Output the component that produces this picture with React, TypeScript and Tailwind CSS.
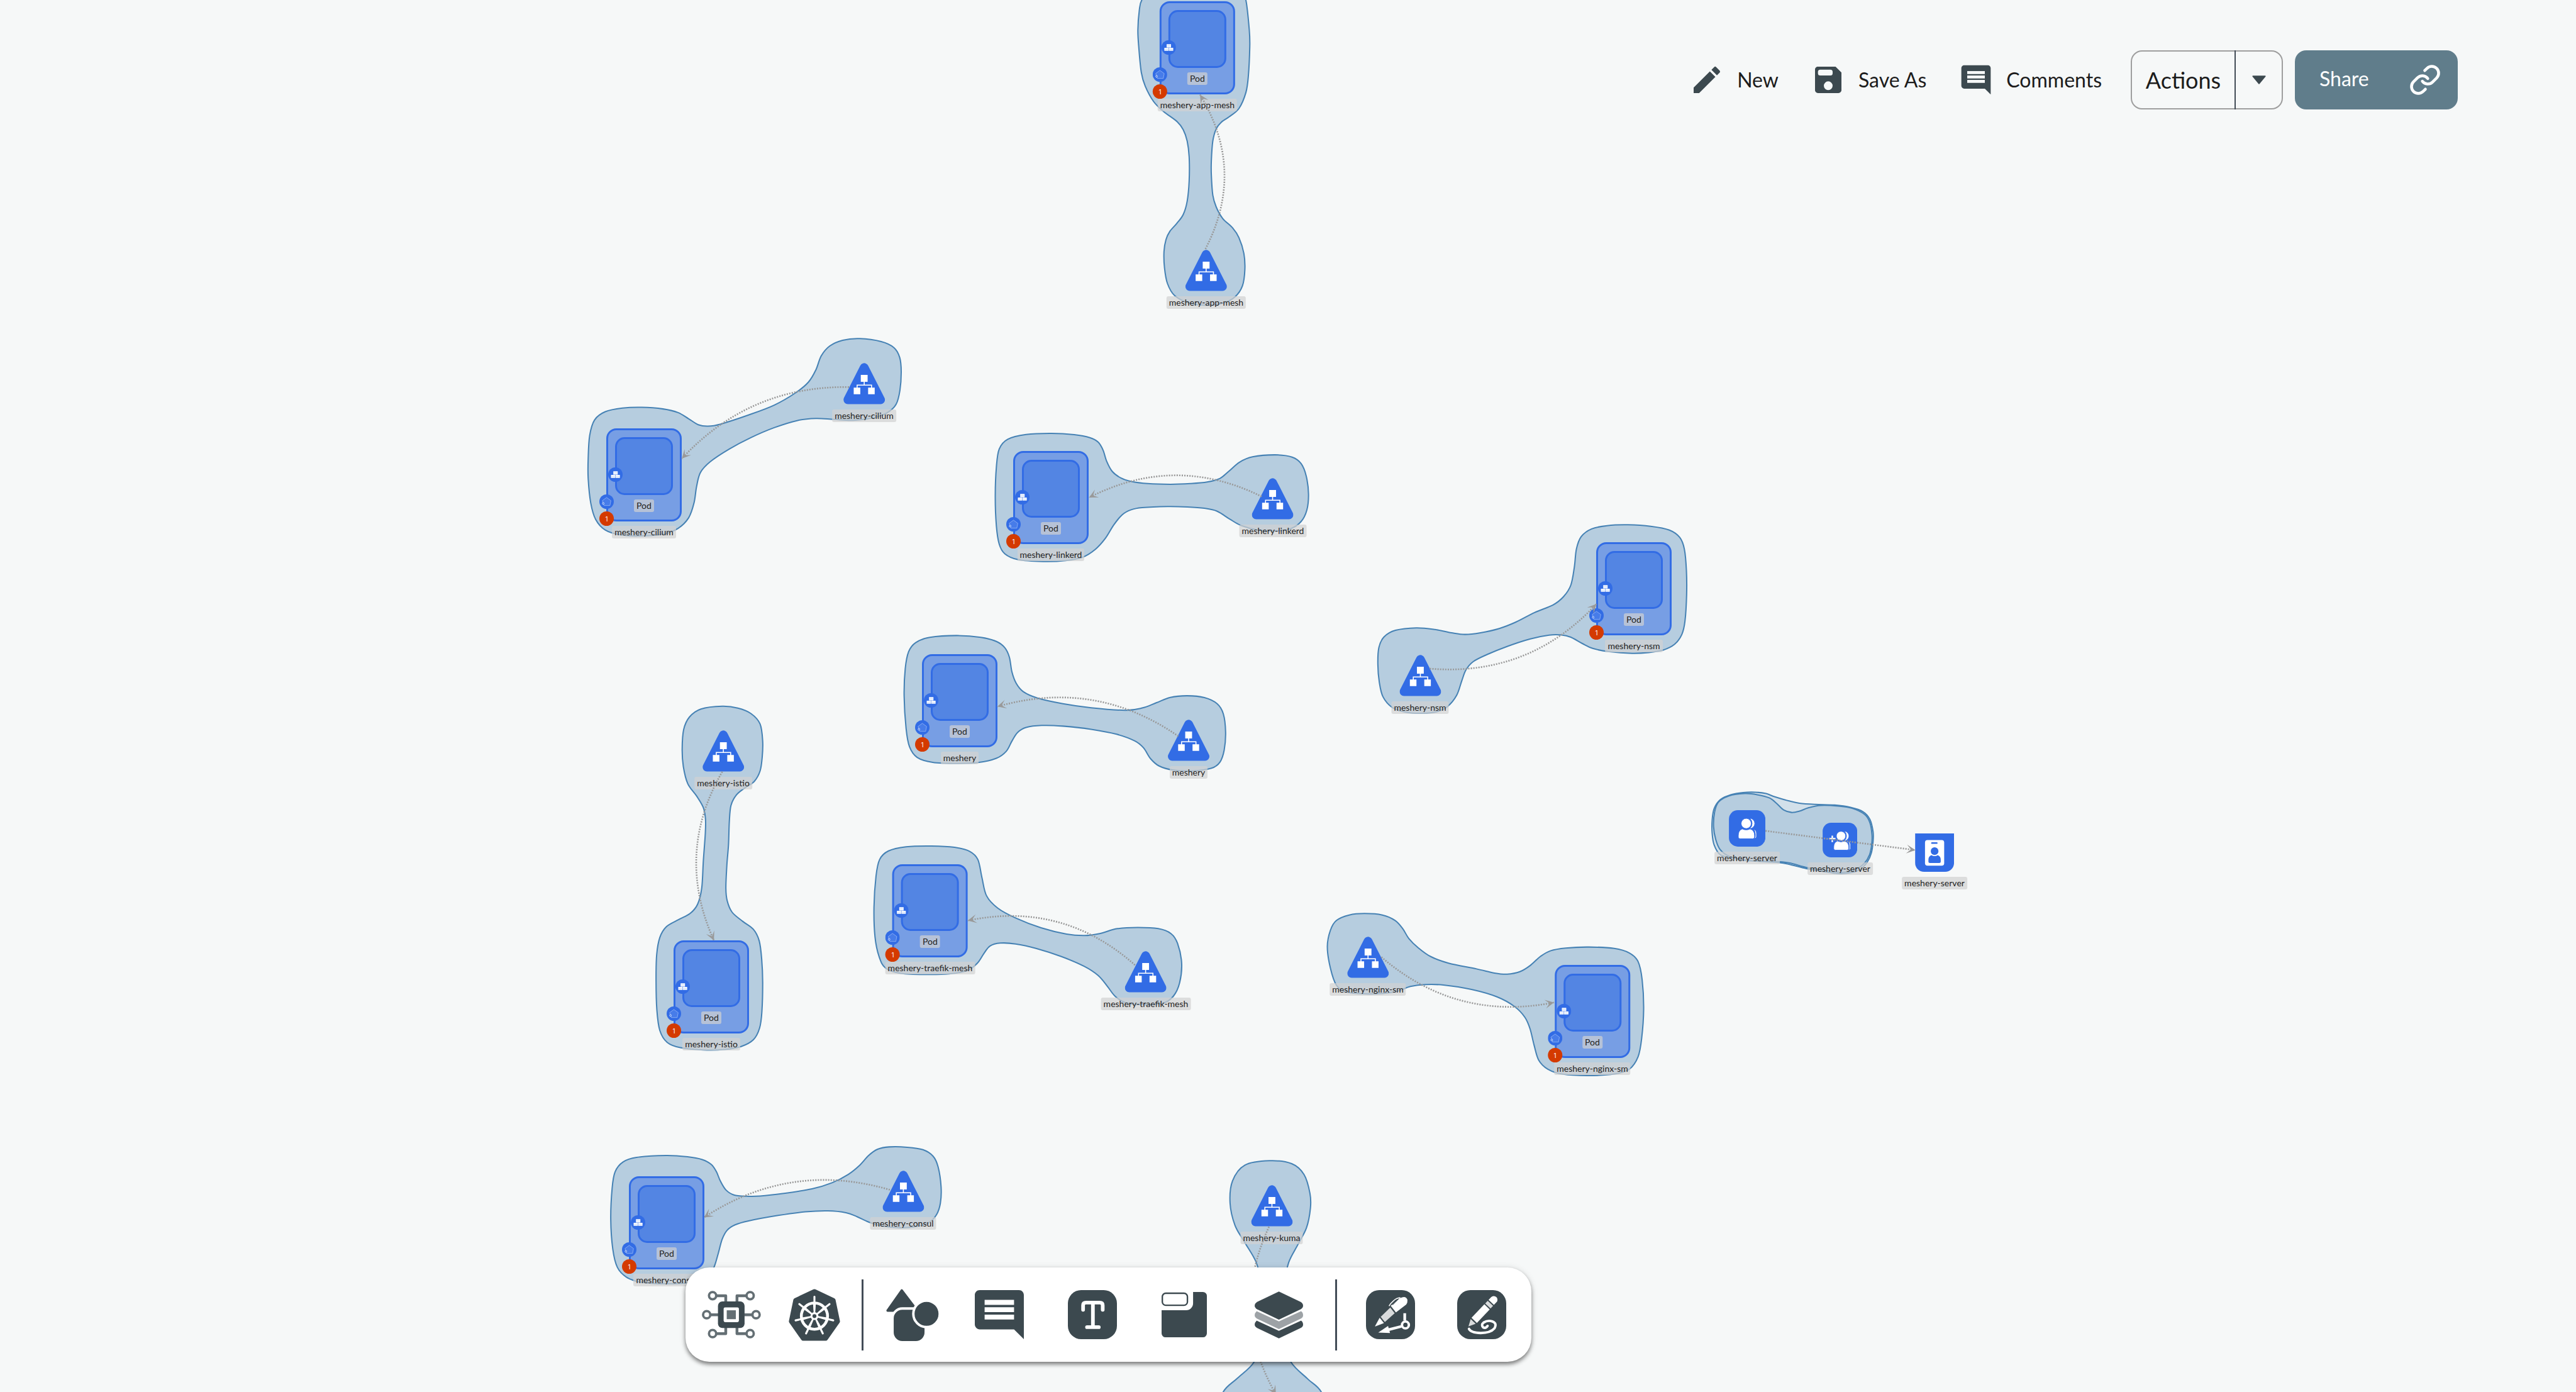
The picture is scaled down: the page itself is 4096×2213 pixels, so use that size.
import React from "react";

const ZOOM = 0.784;
const px = (v: number) => Math.round(v * ZOOM);

type Pt = [number, number];

/* A hull is a closed outline on its own grid: origin (x, y), grid step (kx, ky). */
type Hull = { x: number; y: number; kx: number; ky: number; faint?: boolean; pts: number[] };

const hulls: Hull[] = [
  {
    x: 0, y: 0, kx: 1, ky: 1,
    pts: [2420, -38, 2490, -32, 2516, -18, 2527, 0, 2534, 61, 2535, 94, 2532, 155, 2527, 188, 2513, 220, 2493, 237, 2477, 248, 2467, 261, 2460, 286, 2457, 326, 2457, 355, 2460, 396, 2467, 420, 2480, 443, 2500, 462, 2513, 482, 2523, 514, 2525, 547, 2520, 580, 2505, 602, 2480, 615, 2447, 619, 2413, 615, 2383, 600, 2368, 575, 2362, 543, 2361, 510, 2365, 486, 2373, 469, 2387, 453, 2400, 435, 2408, 408, 2412, 367, 2412, 318, 2408, 286, 2400, 263, 2388, 247, 2360, 226, 2340, 206, 2323, 175, 2315, 147, 2310, 98, 2308, 61, 2311, 20, 2316, 0, 2335, -22, 2370, -34],
  },
  {
    x: 1180, y: 670, kx: 0.4337, ky: 0.3333,
    pts: [1300, 50, 1400, 68, 1460, 105, 1487, 165, 1494, 250, 1488, 365, 1470, 450, 1430, 500, 1370, 530, 1270, 547, 1180, 542, 1095, 536, 1010, 548, 900, 592, 790, 653, 690, 722, 600, 800, 555, 865, 537, 950, 525, 1050, 500, 1140, 450, 1205, 380, 1240, 270, 1251, 180, 1244, 110, 1215, 65, 1150, 42, 1050, 30, 900, 30, 780, 37, 640, 60, 545, 110, 495, 190, 473, 280, 468, 380, 478, 450, 500, 500, 538, 545, 574, 590, 583, 650, 570, 780, 515, 900, 455, 1000, 380, 1060, 315, 1095, 240, 1120, 155, 1160, 95, 1220, 60],
  },
  {
    x: 1800, y: 860, kx: 0.574, ky: 0.4592,
    pts: [580, 41, 660, 47, 715, 60, 745, 80, 762, 115, 775, 165, 795, 210, 825, 238, 860, 253, 920, 263, 1000, 266, 1070, 263, 1130, 256, 1175, 240, 1205, 210, 1245, 168, 1290, 145, 1370, 136, 1430, 146, 1462, 175, 1480, 230, 1488, 310, 1482, 380, 1462, 430, 1425, 462, 1375, 472, 1310, 468, 1250, 448, 1210, 420, 1165, 385, 1120, 372, 1060, 366, 990, 364, 900, 369, 860, 379, 830, 400, 800, 445, 770, 505, 735, 553, 690, 588, 630, 603, 550, 607, 460, 598, 415, 573, 395, 530, 385, 450, 381, 320, 385, 190, 395, 110, 425, 67, 490, 46],
  },
  {
    x: 1800, y: 860, kx: 0.574, ky: 0.4592,
    pts: [245, 934, 330, 942, 385, 960, 415, 988, 431, 1030, 440, 1095, 455, 1145, 480, 1182, 530, 1210, 620, 1235, 720, 1253, 840, 1264, 900, 1254, 950, 1231, 1000, 1207, 1060, 1200, 1120, 1208, 1165, 1235, 1187, 1280, 1195, 1360, 1190, 1440, 1175, 1493, 1145, 1520, 1080, 1532, 1010, 1528, 960, 1510, 930, 1478, 905, 1430, 875, 1400, 810, 1370, 720, 1348, 620, 1334, 545, 1331, 490, 1340, 460, 1362, 440, 1400, 420, 1445, 385, 1476, 320, 1495, 245, 1499, 160, 1494, 105, 1472, 78, 1425, 66, 1345, 59, 1200, 63, 1080, 75, 1005, 100, 965, 150, 942],
  },
  {
    x: 2780, y: 1040, kx: 0.4209, ky: 0.3333,
    pts: [1240, 73, 1350, 82, 1440, 105, 1490, 150, 1512, 220, 1522, 350, 1523, 500, 1515, 660, 1500, 740, 1465, 800, 1410, 835, 1340, 850, 1260, 855, 1150, 845, 1070, 825, 1020, 795, 965, 757, 920, 743, 860, 744, 770, 767, 660, 812, 560, 863, 495, 905, 460, 955, 440, 1020, 415, 1110, 370, 1180, 320, 1210, 250, 1220, 170, 1213, 105, 1185, 60, 1120, 42, 1030, 35, 920, 40, 820, 65, 755, 120, 715, 220, 700, 310, 710, 390, 730, 455, 740, 530, 730, 620, 704, 700, 665, 790, 607, 880, 560, 930, 510, 965, 440, 982, 330, 992, 220, 1015, 145, 1065, 98, 1140, 78],
  },
  {
    x: 1750, y: 1700, kx: 1.0332, ky: 0.3333,
    pts: [135, 47, 180, 55, 210, 80, 226, 130, 234, 240, 243, 350, 265, 425, 300, 485, 350, 545, 400, 583, 435, 592, 465, 580, 500, 550, 540, 543, 580, 550, 605, 580, 618, 640, 626, 760, 622, 880, 610, 960, 590, 1003, 550, 1013, 515, 1000, 495, 960, 480, 900, 462, 835, 435, 780, 390, 720, 340, 670, 300, 643, 270, 638, 250, 655, 238, 700, 225, 760, 205, 805, 170, 825, 125, 829, 75, 822, 45, 790, 32, 720, 24, 600, 22, 420, 26, 230, 33, 130, 50, 78, 85, 52],
  },
  {
    x: 1750, y: 1700, kx: 1.0332, ky: 0.3333,
    pts: [985, 458, 1020, 467, 1045, 500, 1060, 550, 1072, 610, 1090, 665, 1115, 720, 1150, 760, 1205, 795, 1240, 820, 1265, 827, 1290, 812, 1310, 775, 1330, 720, 1350, 685, 1380, 668, 1425, 662, 1475, 670, 1505, 698, 1522, 750, 1530, 860, 1533, 1040, 1529, 1220, 1522, 1330, 1505, 1405, 1475, 1435, 1425, 1444, 1375, 1436, 1345, 1405, 1327, 1350, 1318, 1260, 1310, 1160, 1300, 1090, 1280, 1025, 1245, 965, 1195, 920, 1140, 893, 1105, 890, 1075, 902, 1050, 930, 1020, 945, 985, 947, 950, 935, 930, 895, 918, 790, 912, 660, 918, 560, 930, 500, 955, 467],
  },
  {
    x: 1310, y: 1410, kx: 0.3333, ky: 0.4656,
    pts: [465, 48, 560, 56, 640, 80, 695, 125, 711, 200, 708, 270, 695, 330, 660, 375, 600, 405, 550, 435, 518, 480, 508, 550, 503, 650, 493, 740, 487, 840, 495, 895, 525, 945, 590, 985, 655, 1020, 690, 1070, 705, 1150, 711, 1250, 706, 1380, 692, 1450, 655, 1500, 580, 1530, 480, 1543, 350, 1545, 210, 1535, 130, 1512, 85, 1460, 67, 1370, 62, 1240, 66, 1130, 85, 1055, 125, 1008, 200, 977, 270, 950, 315, 910, 340, 840, 350, 720, 362, 600, 363, 540, 350, 490, 310, 440, 255, 385, 228, 310, 221, 235, 230, 150, 265, 95, 335, 60],
  },
  {
    x: 1220, y: 2300, kx: 0.4592, ky: 0.3333,
    pts: [285, 130, 380, 138, 445, 155, 485, 185, 508, 230, 525, 285, 550, 340, 585, 370, 640, 378, 700, 377, 800, 362, 930, 333, 1020, 295, 1090, 245, 1140, 190, 1180, 130, 1220, 92, 1270, 78, 1350, 80, 1420, 95, 1465, 135, 1487, 200, 1500, 320, 1497, 420, 1480, 490, 1445, 540, 1390, 563, 1320, 570, 1240, 560, 1180, 535, 1130, 503, 1080, 478, 1000, 467, 900, 473, 780, 495, 650, 528, 590, 552, 555, 585, 533, 640, 515, 730, 497, 810, 470, 870, 400, 902, 285, 911, 170, 900, 110, 870, 70, 810, 50, 700, 41, 520, 47, 330, 60, 230, 95, 170, 155, 142],
  },
  {
    x: 0, y: 0, kx: 1, ky: 1,
    pts: [2575, 2354, 2620, 2360, 2645, 2382, 2657, 2420, 2658, 2450, 2650, 2490, 2632, 2525, 2614, 2560, 2606, 2600, 2602, 2660, 2606, 2720, 2619, 2763, 2653, 2797, 2680, 2823, 2700, 2880, 2460, 2880, 2481, 2823, 2510, 2795, 2543, 2763, 2556, 2720, 2560, 2660, 2557, 2600, 2548, 2560, 2525, 2520, 2505, 2485, 2495, 2440, 2500, 2395, 2525, 2363],
  },
  {
    x: 3450, y: 1590, kx: 0.3571, ky: 0.3333, faint: true,
    pts: [310, 50, 370, 58, 420, 78, 500, 103, 560, 117, 650, 124, 760, 128, 850, 142, 920, 168, 960, 215, 978, 290, 978, 350, 968, 420, 945, 475, 905, 520, 850, 540, 780, 545, 700, 533, 600, 515, 500, 488, 440, 478, 300, 468, 180, 450, 110, 430, 75, 370, 64, 300, 64, 220, 75, 150, 110, 95, 170, 65, 240, 52],
  },
  {
    x: 3450, y: 1590, kx: 0.3571, ky: 0.3333, faint: true,
    pts: [250, 58, 320, 65, 390, 85, 430, 118, 470, 158, 515, 173, 560, 165, 610, 145, 680, 130, 780, 134, 860, 148, 930, 185, 960, 235, 972, 310, 970, 370, 958, 430, 930, 480, 880, 520, 800, 538, 700, 525, 600, 508, 500, 480, 400, 470, 250, 465, 160, 440, 110, 400, 85, 340, 72, 260, 78, 170, 100, 110, 160, 72],
  },
];

/* Smooth closed curve through every outline point (Catmull-Rom to cubic). */
function hullPath(h: Hull) {
  const p: Pt[] = [];
  for (let i = 0; i < h.pts.length; i += 2) p.push([h.x + h.pts[i] * h.kx, h.y + h.pts[i + 1] * h.ky]);
  const n = p.length;
  let d = `M${p[0][0]} ${p[0][1]}`;
  for (let i = 0; i < n; i++) {
    const a = p[(i + n - 1) % n], b = p[i], c = p[(i + 1) % n], e = p[(i + 2) % n];
    d += `C${b[0] + (c[0] - a[0]) / 6} ${b[1] + (c[1] - a[1]) / 6} ${c[0] - (e[0] - b[0]) / 6} ${c[1] - (e[1] - b[1]) / 6} ${c[0]} ${c[1]}`;
  }
  return d + "Z";
}

type Edge = { from: Pt; to: Pt; bend: number };
const edges: Edge[] = [
  { from: [2445, 505], to: [2434, 192], bend: 88 },
  { from: [1722, 785], to: [1383, 930], bend: 82 },
  { from: [2559, 1007], to: [2209, 1009], bend: 88 },
  { from: [2390, 1493], to: [2023, 1433], bend: 88 },
  { from: [2900, 1356], to: [3238, 1225], bend: 88 },
  { from: [2302, 1957], to: [1963, 1867], bend: 88 },
  { from: [2802, 1941], to: [3152, 2033], bend: 88 },
  { from: [1465, 1565], to: [1448, 1907], bend: 88 },
  { from: [1805, 2413], to: [1428, 2469], bend: 88 },
  { from: [2574, 2488], to: [2588, 2828], bend: 88 },
  { from: [3581, 1685], to: [3885, 1724], bend: 0 },
];

function EdgeLine({ from, to, bend }: Edge) {
  const dx = to[0] - from[0], dy = to[1] - from[1];
  const len = Math.hypot(dx, dy);
  const cx = (from[0] + to[0]) / 2 - (dy / len) * bend;
  const cy = (from[1] + to[1]) / 2 + (dx / len) * bend;
  const ang = (Math.atan2(to[1] - cy, to[0] - cx) * 180) / Math.PI;
  return (
    <g>
      <path d={`M${from[0]} ${from[1]}Q${cx} ${cy} ${to[0]} ${to[1]}`} fill="none" stroke="#999" strokeWidth={3.4} strokeDasharray="2.6 2.6" />
      <path d="M0 0L-18 -9L-9 0L-18 9Z" fill="#999" transform={`translate(${to[0]} ${to[1]}) rotate(${ang})`} />
    </g>
  );
}

function NodeLabel({ children }: { children: React.ReactNode }) {
  return <span className="flex h-5 items-center rounded-[3px] bg-[#d1d1d1]/70 px-1 text-[14px] leading-5 whitespace-nowrap text-[#222]">{children}</span>;
}

function CanvasNode({ cx, top, children }: { cx: number; top: number; children: React.ReactNode }) {
  return (
    <div className="absolute flex -translate-x-1/2 flex-col items-center" style={{ left: px(cx), top: px(top) }}>
      {children}
    </div>
  );
}

function DeploymentNode({ x, y, name }: { x: number; y: number; name: string }) {
  return (
    <CanvasNode cx={x + 76} top={y}>
      <div className="relative flex h-[148px] w-[120px] flex-col items-center rounded-2xl border-[3px] border-[#326ce5] bg-[#779ee4] pt-[11px]">
        <div className="h-[92px] w-[92px] rounded-[15px] border-[3px] border-[#326ce5] bg-[#5385e3]" />
        <span className="mt-[7px] flex h-5 items-center rounded-[3px] bg-[#d1d1d1]/70 px-1 text-[14px] leading-5 text-[#222]">Pod</span>
        <svg className="absolute top-[59px] left-0 h-[23px] w-[23px]" viewBox="0 0 28 28" aria-hidden="true">
          <circle cx="14" cy="14" r="14" fill="#326ce5" />
          <path d="M10 7.5h8.5v6.5H10zM5.5 14.5h8.2v6H5.500zM14.400 14.500h8.300v6h-8.300z" fill="#fff" />
          <path d="M12 9v3.500M14.200 9v3.500M16.400 9v3.500M7.500 16v3M9.600 16v3M11.700 16v3M16.400 16v3M18.500 16v3M20.600 16v3" stroke="#9dbcf5" strokeWidth=".7" />
        </svg>
        <svg className="absolute top-[102px] -left-[14px] h-[23px] w-[23px]" viewBox="0 0 28 28" aria-hidden="true">
          <circle cx="14" cy="14" r="14" fill="#326ce5" />
          <path d="M14 6L22.300 12L20.500 21.500H9L5.800 12Z" fill="#477ce9" stroke="#a9c4f7" strokeWidth=".8" strokeLinejoin="round" />
          <circle cx="7.500" cy="17.500" r="1.700" fill="#326ce5" stroke="#fff" strokeWidth=".9" />
        </svg>
        <span className="absolute top-[129px] -left-[14px] flex h-[23px] w-[23px] items-center justify-center rounded-full bg-[#d43a00] font-['Inter',sans-serif] text-[10px] leading-none text-white">1</span>
      </div>
      <div className="mt-[7px]"><NodeLabel>{name}</NodeLabel></div>
    </CanvasNode>
  );
}

function ServiceNode({ x, y, name }: { x: number; y: number; name: string }) {
  return (
    <CanvasNode cx={x + 42} top={y}>
      <svg className="h-[66px] w-[66px]" viewBox="0 0 85 84" aria-hidden="true">
        <path d="M42.500 9L76 75H9Z" fill="#326ce5" stroke="#326ce5" strokeWidth="18" strokeLinejoin="round" />
        <path d="M35.500 24h14v14h-14zM21 50h13.500v13.500H21zM50.500 50H64v13.500H50.500z" fill="#fff" />
        <path d="M42.500 37v8.500M28 51v-6h29.500v6" fill="none" stroke="#fff" strokeWidth="2" />
      </svg>
      <div className="mt-2"><NodeLabel>{name}</NodeLabel></div>
    </CanvasNode>
  );
}

const people = (
  <>
    <path d="M42 16.500a10 10 0 0 1 0 21q5-4 5-10.500t-5-10.500zM50 38.500q6 2 6 9v6q0 4-4 4 2-3 1.500-9-.5-7-3.500-10z" fill="#fff" />
    <circle cx="35" cy="27" r="10.300" fill="#fff" />
    <path d="M27 38q8 4 16 0 9 3 9 13v4q0 3-4 3H23q-4 0-4-3v-4q0-10 8-13z" fill="#fff" />
  </>
);

function Graph() {
  return (
    <div className="absolute inset-0 overflow-hidden">
      <svg className="absolute top-0 left-0 max-w-none" style={{ width: px(5225), height: px(2823) }} viewBox="0 0 5225 2823" aria-hidden="true">
        {hulls.map((h, i) => (
          <path key={i} d={hullPath(h)} fill="#4682b4" fillOpacity={h.faint ? 0.2 : 0.36} stroke="#4682b4" strokeWidth={2.600} />
        ))}
      </svg>

      <DeploymentNode x={2353} y={2} name="meshery-app-mesh" />
      <ServiceNode x={2405} y={506} name="meshery-app-mesh" />
      <DeploymentNode x={1230} y={869} name="meshery-cilium" />
      <ServiceNode x={1710} y={736} name="meshery-cilium" />
      <DeploymentNode x={2055} y={915} name="meshery-linkerd" />
      <ServiceNode x={2540} y={970} name="meshery-linkerd" />
      <DeploymentNode x={1870} y={1326} name="meshery" />
      <ServiceNode x={2369} y={1459} name="meshery" />
      <DeploymentNode x={3238} y={1100} name="meshery-nsm" />
      <ServiceNode x={2838} y={1328} name="meshery-nsm" />
      <DeploymentNode x={1810} y={1752} name="meshery-traefik-mesh" />
      <ServiceNode x={2282} y={1928} name="meshery-traefik-mesh" />
      <DeploymentNode x={3153} y={1957} name="meshery-nginx-sm" />
      <ServiceNode x={2732} y={1899} name="meshery-nginx-sm" />
      <DeploymentNode x={1366} y={1907} name="meshery-istio" />
      <ServiceNode x={1425} y={1481} name="meshery-istio" />
      <DeploymentNode x={1276} y={2385} name="meshery-consul" />
      <ServiceNode x={1789} y={2374} name="meshery-consul" />
      <ServiceNode x={2537} y={2403} name="meshery-kuma" />

      <CanvasNode cx={3543} top={1643}>
        <svg className="h-[58px] w-[58px]" viewBox="0 0 74 74" aria-hidden="true">
          <rect width="74" height="74" rx="18" fill="#326ce5" />
          <g stroke="#326ce5" strokeWidth="1.200">{people}</g>
        </svg>
        <div className="mt-2"><NodeLabel>meshery-server</NodeLabel></div>
      </CanvasNode>
      <CanvasNode cx={3732} top={1669}>
        <svg className="h-[55px] w-[55px]" viewBox="0 0 70 70" aria-hidden="true">
          <rect width="70" height="70" rx="17" fill="#326ce5" />
          <g transform="translate(5 2) scale(.92)" stroke="#326ce5" strokeWidth="1.200">{people}</g>
          <path d="M13 32h13M19.500 26v13" stroke="#fff" strokeWidth="3" />
        </svg>
        <div className="mt-2"><NodeLabel>meshery-server</NodeLabel></div>
      </CanvasNode>
      <CanvasNode cx={3924} top={1690}>
        <svg className="h-[61px] w-[62px]" viewBox="0 0 79 78" aria-hidden="true">
          <path d="M0 0H79V60a18 18 0 0 1-18 18H18a18 18 0 0 1-18-18Z" fill="#326ce5" />
          <rect x="20" y="13.500" width="39" height="52" rx="5" fill="#fff" />
          <rect x="32.500" y="18" width="13" height="3.200" rx="1.600" fill="#326ce5" />
          <circle cx="39.500" cy="36" r="7.800" fill="#326ce5" />
          <path d="M33 44q6.500 4 13 0 6 2.500 6 9v5q0 2-3 2H30q-3 0-3-2v-5q0-6.500 6-9z" fill="#326ce5" />
        </svg>
        <div className="mt-2"><NodeLabel>meshery-server</NodeLabel></div>
      </CanvasNode>

      <svg className="pointer-events-none absolute top-0 left-0 max-w-none" style={{ width: px(5225), height: px(2823) }} viewBox="0 0 5225 2823" aria-hidden="true">
        {edges.map((e, i) => <EdgeLine key={i} {...e} />)}
      </svg>
    </div>
  );
}

function HeaderButton({ label, children }: { label: string; children: React.ReactNode }) {
  return (
    <button className="flex items-center gap-5 text-[32px] leading-10 whitespace-nowrap text-[#1c1c1c]">
      <svg className="h-14 w-14" viewBox="0 0 24 24" fill="#3c494f" aria-hidden="true">{children}</svg>
      {label}
    </button>
  );
}

const commentPath = "M21.990 4c0-1.100-.890-2-1.990-2H4c-1.100 0-2 .9-2 2v12c0 1.100.9 2 2 2h14l4 4-.010-18zM18 14H6v-2h12v2zm0-3H6V9h12v2zm0-3H6V6h12v2z";

function Header() {
  return (
    <header className="relative flex items-center justify-end pt-20 pr-[188px]">
      <nav className="flex items-center gap-[51px]">
        <HeaderButton label="New">
          <path d="M3 17.250V21h3.750L17.810 9.940l-3.750-3.750L3 17.250zM20.710 7.040c.390-.390.390-1.020 0-1.410l-2.340-2.340a.9959.9959 0 0 0-1.410 0l-1.830 1.830 3.750 3.750 1.830-1.830z" />
        </HeaderButton>
        <HeaderButton label="Save As">
          <path fillRule="evenodd" d="M17 3H5c-1.110 0-2 .9-2 2v14c0 1.100.89 2 2 2h14c1.100 0 2-.9 2-2V7l-4-4zM12 19a3 3 0 1 1 0-6 3 3 0 0 1 0 6zM13.500 9h-7A1.500 1.500 0 0 1 5 7.500v-1A1.500 1.500 0 0 1 6.500 5h7A1.500 1.500 0 0 1 15 6.500v1A1.500 1.500 0 0 1 13.500 9z" />
        </HeaderButton>
        <HeaderButton label="Comments">
          <path fillRule="evenodd" d={commentPath} />
        </HeaderButton>
      </nav>
      <div className="ml-[46px] flex h-[94px] w-[242px] rounded-[18px] border-2 border-[#9e9e9e]">
        <button className="-my-0.5 flex flex-1 items-center justify-center border-r-2 border-[#434c57] text-[36px] leading-none text-[#1c1c1c]">Actions</button>
        <button aria-label="More actions" className="flex w-[73px] items-center justify-center">
          <svg className="h-[52px] w-[52px]" viewBox="0 0 24 24" fill="#3c494f" stroke="#3c494f" strokeLinejoin="round" strokeWidth=".8" aria-hidden="true">
            <path d="M7.500 9.300l4.500 5.400 4.500-5.400z" />
          </svg>
        </button>
      </div>
      <button className="ml-[19px] flex h-[94px] w-[259px] items-center justify-between rounded-[18px] bg-[#607d8b] pr-[26px] pl-[39px] text-[32px] leading-none text-white">
        <span className="pb-1">Share</span>
        <svg className="h-[52px] w-[52px]" viewBox="0 0 24 24" fill="none" stroke="#fff" strokeWidth="2.100" strokeLinecap="round" strokeLinejoin="round" aria-hidden="true">
          <path d="M10 13a5 5 0 0 0 7.540.540l3-3a5 5 0 0 0-7.070-7.070l-1.720 1.710" />
          <path d="M14 11a5 5 0 0 0-7.540-.540l-3 3a5 5 0 0 0 7.070 7.070l1.710-1.710" />
        </svg>
      </button>
    </header>
  );
}

const DARK = "#3c494f";

function ChipIcon() {
  return (
    <svg className="h-[76px] w-[94px]" viewBox="0 0 120 97" aria-hidden="true">
      <g fill="none" stroke="#646f74">
        <path strokeWidth="5.700" strokeLinejoin="round" d="M30 10.300H48.500V24M90 10.300H71.300V24M30 87H48.500V73M90 87H71.300V73M18 48.700H34M102 48.700H86" />
        <g strokeWidth="4.800" fill="#fff">
          <circle cx="21.800" cy="10" r="7.300" /><circle cx="98" cy="10" r="7.300" />
          <circle cx="9.800" cy="48.700" r="7.300" /><circle cx="110" cy="48.700" r="7.300" />
          <circle cx="21.800" cy="87" r="7.300" /><circle cx="98" cy="87" r="7.300" />
        </g>
      </g>
      <rect x="32.700" y="21.700" width="54" height="54" rx="9" fill={DARK} />
      <rect x="44.200" y="33.700" width="31" height="30" rx="3" fill="#fff" />
      <rect x="50.500" y="39.700" width="18.500" height="18" fill="#646f74" />
    </svg>
  );
}

function WheelIcon() {
  const spokes = Array.from({ length: 7 }, (_, i) => (i * 360) / 7);
  return (
    <svg className="h-[83px] w-[82px]" viewBox="0 0 105 106" aria-hidden="true">
      <path d="M52.500 5L91 23L100 66L75.500 101H29.500L5 66L14 23Z" fill={DARK} stroke={DARK} strokeWidth="9" strokeLinejoin="round" />
      <circle cx="52.500" cy="55.300" r="26.700" fill="none" stroke="#fff" strokeWidth="5.800" />
      {spokes.map((a) => (
        <g key={a} transform={`rotate(${a} 52.500 55.300)`}>
          <path d="M52.500 28V16" stroke="#fff" strokeWidth="4" strokeLinecap="round" />
          <path d="M49.500 28H55.500L54 50H51Z" fill="#fff" />
        </g>
      ))}
      <circle cx="52.500" cy="55.300" r="8" fill="#fff" />
      <circle cx="52.500" cy="55.300" r="4" fill={DARK} />
    </svg>
  );
}

function ShapesIcon() {
  return (
    <svg className="h-[83px] w-[84px]" viewBox="0 0 108 106" aria-hidden="true">
      <path d="M32 3L63 44H3Z" fill={DARK} stroke={DARK} strokeWidth="5" strokeLinejoin="round" />
      <rect x="13" y="39.800" width="68" height="69" rx="20" fill={DARK} stroke="#fff" strokeWidth="5" />
      <circle cx="82.600" cy="50.700" r="27" fill={DARK} stroke="#fff" strokeWidth="5" />
    </svg>
  );
}

function CommentIcon() {
  return <svg className="h-[78px] w-[78px]" viewBox="2 2 20 20" aria-hidden="true"><path fillRule="evenodd" d={commentPath} fill={DARK} /></svg>;
}

function TextIcon() {
  return (
    <svg className="h-[78px] w-[78px]" viewBox="0 0 100 100" aria-hidden="true">
      <rect width="100" height="100" rx="27" fill={DARK} />
      <path d="M31 40V31Q31 25.500 37 25.500H65Q71 25.500 71 31V40M51 26V75M39 75.500H63" fill="none" stroke="#fff" strokeWidth="7.500" strokeLinecap="round" />
    </svg>
  );
}

function SectionIcon() {
  return (
    <svg className="h-[72px] w-[72px]" viewBox="0 0 92 92" aria-hidden="true">
      <path d="M64 0H84a8 8 0 0 1 8 8V84a8 8 0 0 1-8 8H8a8 8 0 0 1-8-8V37H50a14 14 0 0 0 14-14Z" fill={DARK} />
      <rect x="1.500" y="2.500" width="51" height="24.500" rx="7" fill="#fff" stroke={DARK} strokeWidth="3" />
    </svg>
  );
}

function LayersIcon() {
  return (
    <svg className="h-[75px] w-[77px]" viewBox="0 0 98 95" aria-hidden="true">
      <path d="M49 0L93 21Q98 24 98 28.700T93 36L49 57L5 36Q0 33 0 28.700T5 21Z" fill={DARK} />
      <path d="M4 40L49 60.500L94 40Q98 43 98 48T93 55L49 76L5 55Q0 52 0 48T4 40Z" fill="#9da2a6" />
      <path d="M4 59L49 79.500L94 59Q98 62 98 67T93 74L49 95L5 74Q0 71 0 67T4 59Z" fill={DARK} />
    </svg>
  );
}

function PenEdgeIcon() {
  return (
    <svg className="h-[78px] w-[78px]" viewBox="0 0 100 100" aria-hidden="true">
      <rect width="100" height="100" rx="27" fill={DARK} />
      <path d="M50.500 32L68 17Q75 14 77 14Q83 14 84.500 20Q85 26 82 29.500L61 45.500Z" fill="#fff" />
      <path d="M47 32.500Q50 27 56 22Q62 16 70 15.500" fill="none" stroke="#fff" strokeWidth="2" />
      <path d="M54 30L66 18" stroke={DARK} strokeWidth="1.500" />
      <path d="M49.500 35.500L58.500 47L38.500 65L30 54.500Z" fill="#d9dbdc" />
      <path d="M28 57L36 67L19 73.500Z" fill="#fff" stroke="#fff" strokeLinejoin="round" />
      <path d="M79 47V62M72 74L45 81" stroke="#fff" strokeWidth="5.500" />
      <circle cx="80.400" cy="71" r="7" fill={DARK} stroke="#fff" strokeWidth="5" />
      <path d="M25 86.500L45 73L49 87.500Z" fill="#fff" />
    </svg>
  );
}

function PencilIcon() {
  return (
    <svg className="h-[78px] w-[78px]" viewBox="0 0 100 100" aria-hidden="true">
      <rect width="100" height="100" rx="27" fill={DARK} />
      <g transform="translate(23 74) rotate(-46.500)">
        <path d="M0 0L14 -7V7Z" fill="#d9dbdc" />
        <path d="M17 -7.500H55V7.500H17Z" fill="#fff" />
        <path d="M57.500 -7.500H65V7.500H57.500Z" fill="#d9dbdc" />
        <path d="M67.500 -7.500H75a7.500 7.500 0 0 1 0 15H67.500Z" fill="#fff" />
      </g>
      <path d="M62 73Q58 79 53 76Q48 71 54 66Q62 61 71 63.500Q82 67 76 78Q68 87.500 48 87.500Q28 87 24 79" fill="none" stroke="#fff" strokeWidth="5" strokeLinecap="round" />
    </svg>
  );
}

function Divider({ className }: { className: string }) {
  return <span className={`h-[113px] w-[3px] bg-[#434c57] ${className}`} />;
}

function Toolbar() {
  return (
    <div role="toolbar" aria-label="Design tools" className="relative mt-auto mb-12 ml-[1090px] flex h-[150px] w-[1345px] items-center self-start rounded-[38px] bg-white pl-[26px] shadow-[0_4px_6px_rgba(0,0,0,0.45),0_1px_12px_rgba(0,0,0,0.12)]">
      <button aria-label="Components"><ChipIcon /></button>
      <button aria-label="Kubernetes" className="ml-11"><WheelIcon /></button>
      <Divider className="ml-[34px]" />
      <button aria-label="Shapes" className="ml-9"><ShapesIcon /></button>
      <button aria-label="Comment" className="ml-[57px]"><CommentIcon /></button>
      <button aria-label="Text" className="ml-[70px]"><TextIcon /></button>
      <button aria-label="Section" className="ml-[71px]"><SectionIcon /></button>
      <button aria-label="Layers" className="ml-[76px]"><LayersIcon /></button>
      <Divider className="ml-[51px]" />
      <button aria-label="Edge pen" className="ml-[46px]"><PenEdgeIcon /></button>
      <button aria-label="Freehand pencil" className="ml-[67px]"><PencilIcon /></button>
    </div>
  );
}

export default function App() {
  return (
    <main className="relative flex h-screen flex-col overflow-hidden bg-[#f6f8f8] font-['Lato',sans-serif]">
      <Graph />
      <Header />
      <Toolbar />
    </main>
  );
}
